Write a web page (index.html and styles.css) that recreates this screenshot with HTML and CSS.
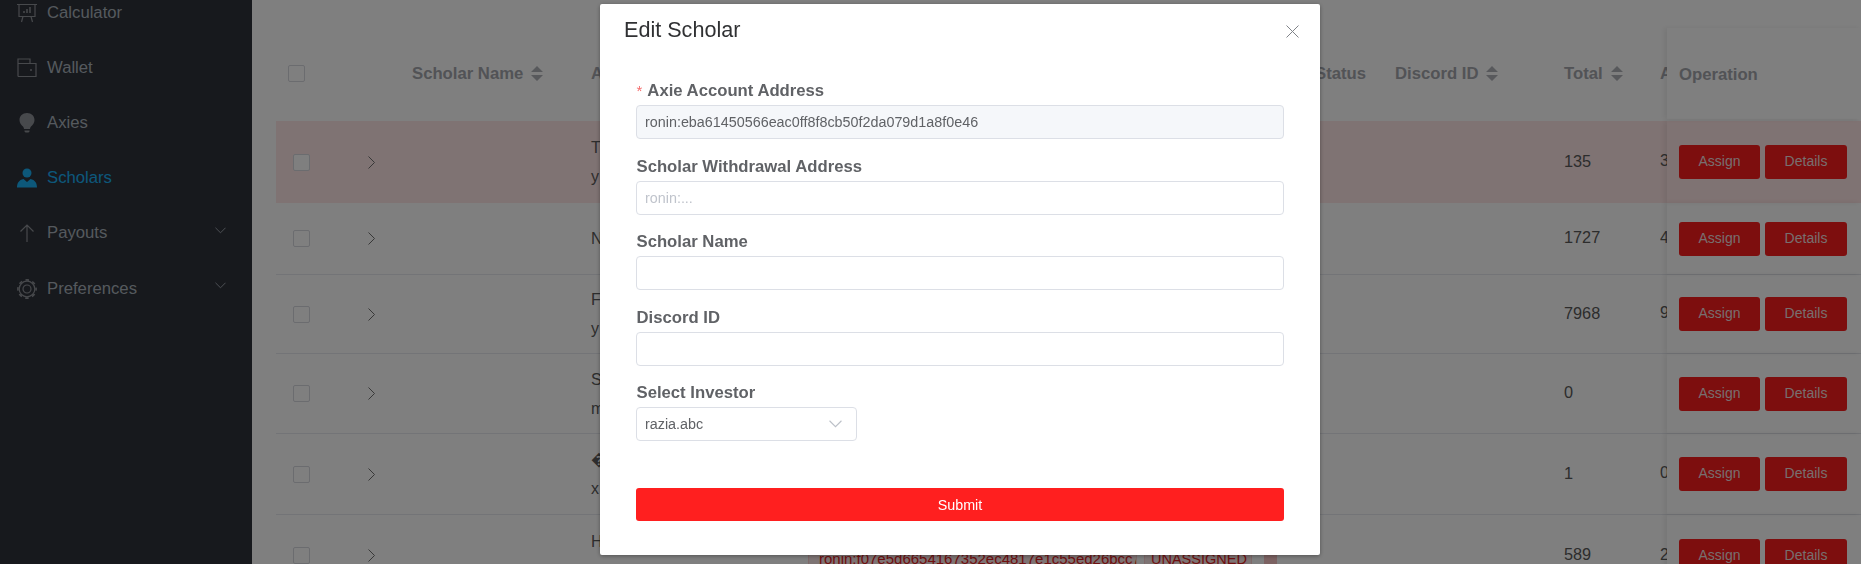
FILE: index.html
```html
<!DOCTYPE html>
<html lang="en">
<head>
<meta charset="utf-8">
<title>Edit Scholar</title>
<link rel="stylesheet" href="styles.css">
</head>
<body>
<div class="app">
  <aside class="sidebar">
    <a class="menu-item">
      <svg class="menu-icon" viewBox="0 0 20 20" fill="none" stroke="currentColor" stroke-width="1.2"><path d="M0 1.500h20M2 1.500v12h16v-12M6 13.500l-1.500 5.500M14 13.500l1.500 5.500"/><path d="M7 10V8M10 10V6M13 10V4" stroke-width="1.500"/></svg>
      <span>Calculator</span>
    </a>
    <a class="menu-item">
      <svg class="menu-icon" viewBox="0 0 20 20" fill="none" stroke="currentColor" stroke-width="1.2"><path d="M1 18.500V1h12v4.500M1 5.500h18v13H1"/><circle cx="14" cy="12" r="1" fill="currentColor" stroke="none"/></svg>
      <span>Wallet</span>
    </a>
    <a class="menu-item">
      <svg class="menu-icon" viewBox="0 0 20 20" fill="currentColor"><path d="M10 0C5.500 0 2.500 3.200 2.500 7c0 2.800 1.700 5 3.500 6.500.5.400.8 1.200 1 2.500h6c.2-1.300.5-2.100 1-2.500 1.800-1.500 3.500-3.700 3.500-6.500 0-3.800-3-7-7.500-7zM7.500 17.500h5v1l-1 1h-3l-1-1z"/></svg>
      <span>Axies</span>
    </a>
    <a class="menu-item menu-item-active">
      <svg class="menu-icon" viewBox="0 0 20 20" fill="currentColor"><circle cx="10" cy="5" r="4.500"/><path d="M0 19.500c0-4.500 2-7.500 6.500-8.500L10 14l3.500-3c4.500 1 6.500 4 6.500 8.500z"/></svg>
      <span>Scholars</span>
    </a>
    <a class="menu-item">
      <svg class="menu-icon" viewBox="0 0 20 20" fill="none" stroke="currentColor" stroke-width="1.2"><path d="M10 19V2M3.500 8.500L10 2l6.500 6.500"/></svg>
      <span>Payouts</span>
      <svg class="menu-caret" viewBox="0 0 12 7" fill="none" stroke="currentColor"><path d="M.5.500L6 6l5.500-5.500"/></svg>
    </a>
    <a class="menu-item">
      <svg class="menu-icon" viewBox="0 0 20 20" fill="none" stroke="currentColor"><circle cx="10" cy="10" r="7.800" stroke-width="1.200"/><circle cx="10" cy="10" r="9.100" stroke-width="1.600" stroke-dasharray="3.570 3.570" stroke-dashoffset="1.800"/><circle cx="10" cy="10" r="4" stroke-width="1.200"/></svg>
      <span>Preferences</span>
      <svg class="menu-caret" viewBox="0 0 12 7" fill="none" stroke="currentColor"><path d="M.5.500L6 6l5.500-5.500"/></svg>
    </a>
  </aside>

  <main class="main">
    <div class="table">
      <div class="row row-head">
        <div class="col-check"><span class="checkbox"></span></div>
        <div class="col-expand"></div>
        <div class="col-name">Scholar Name <svg class="sort" viewBox="0 0 12 15" fill="currentColor"><path d="M6 0l6 6H0zM0 9h12l-6 6z"/></svg></div>
        <div class="col-addr">Axie Address</div>
        <div class="col-status">Status</div>
        <div class="col-discord">Discord ID <svg class="sort" viewBox="0 0 12 15" fill="currentColor"><path d="M6 0l6 6H0zM0 9h12l-6 6z"/></svg></div>
        <div class="col-total">Total <svg class="sort" viewBox="0 0 12 15" fill="currentColor"><path d="M6 0l6 6H0zM0 9h12l-6 6z"/></svg></div>
        <div class="col-avg">A</div>
        <div class="col-op col-op-head">Operation</div>
      </div>

      <div class="row row-alert row-82">
        <div class="col-check"><span class="checkbox"></span></div>
        <div class="col-expand"><svg class="chevron" viewBox="0 0 7 13" fill="none" stroke="currentColor"><path d="M.5.500l6 6-6 6"/></svg></div>
        <div class="col-name"></div>
        <div class="col-addr"><p>T</p><p>y</p></div>
        <div class="col-status"></div>
        <div class="col-discord"></div>
        <div class="col-total">135</div>
        <div class="col-avg">3</div>
        <div class="col-op"><button class="btn">Assign</button><button class="btn">Details</button></div>
      </div>

      <div class="row row-72">
        <div class="col-check"><span class="checkbox"></span></div>
        <div class="col-expand"><svg class="chevron" viewBox="0 0 7 13" fill="none" stroke="currentColor"><path d="M.5.500l6 6-6 6"/></svg></div>
        <div class="col-name"></div>
        <div class="col-addr"><p>N</p></div>
        <div class="col-status"></div>
        <div class="col-discord"></div>
        <div class="col-total">1727</div>
        <div class="col-avg">4</div>
        <div class="col-op"><button class="btn">Assign</button><button class="btn">Details</button></div>
      </div>

      <div class="row row-79">
        <div class="col-check"><span class="checkbox"></span></div>
        <div class="col-expand"><svg class="chevron" viewBox="0 0 7 13" fill="none" stroke="currentColor"><path d="M.5.500l6 6-6 6"/></svg></div>
        <div class="col-name"></div>
        <div class="col-addr"><p>F</p><p>y</p></div>
        <div class="col-status"></div>
        <div class="col-discord"></div>
        <div class="col-total">7968</div>
        <div class="col-avg">9</div>
        <div class="col-op"><button class="btn">Assign</button><button class="btn">Details</button></div>
      </div>

      <div class="row row-80">
        <div class="col-check"><span class="checkbox"></span></div>
        <div class="col-expand"><svg class="chevron" viewBox="0 0 7 13" fill="none" stroke="currentColor"><path d="M.5.500l6 6-6 6"/></svg></div>
        <div class="col-name"></div>
        <div class="col-addr"><p>S</p><p>m</p></div>
        <div class="col-status"></div>
        <div class="col-discord"></div>
        <div class="col-total">0</div>
        <div class="col-avg"></div>
        <div class="col-op"><button class="btn">Assign</button><button class="btn">Details</button></div>
      </div>

      <div class="row row-81">
        <div class="col-check"><span class="checkbox"></span></div>
        <div class="col-expand"><svg class="chevron" viewBox="0 0 7 13" fill="none" stroke="currentColor"><path d="M.5.500l6 6-6 6"/></svg></div>
        <div class="col-name"></div>
        <div class="col-addr"><p>�</p><p>x</p></div>
        <div class="col-status"></div>
        <div class="col-discord"></div>
        <div class="col-total">1</div>
        <div class="col-avg">0</div>
        <div class="col-op"><button class="btn">Assign</button><button class="btn">Details</button></div>
      </div>

      <div class="row row-82">
        <div class="col-check"><span class="checkbox"></span></div>
        <div class="col-expand"><svg class="chevron" viewBox="0 0 7 13" fill="none" stroke="currentColor"><path d="M.5.500l6 6-6 6"/></svg></div>
        <div class="col-name"></div>
        <div class="col-addr col-addr-split">
          <div class="addr-name"><p>H</p><p>unol</p></div>
          <div class="tags"><span class="tag">ronin:f07e5d6654167352ec4817e1c55ed26bcc75</span><span class="tag tag-state">UNASSIGNED</span><span class="tag-dot"></span></div>
        </div>
        <div class="col-status"></div>
        <div class="col-discord"></div>
        <div class="col-total">589</div>
        <div class="col-avg">2</div>
        <div class="col-op"><button class="btn">Assign</button><button class="btn">Details</button></div>
      </div>
    </div>
  </main>
</div>

<div class="overlay">
  <section class="modal">
    <header class="modal-header">
      <h2 class="modal-title">Edit Scholar</h2>
      <svg class="modal-close" viewBox="0 0 13 13" fill="none" stroke="currentColor"><path d="M.5.500l12 12M12.500.500l-12 12"/></svg>
    </header>
    <form class="form">
      <div class="field">
        <label class="label"><span class="required">*</span>Axie Account Address</label>
        <input class="input input-disabled" value="ronin:eba61450566eac0ff8f8cb50f2da079d1a8f0e46" disabled>
      </div>
      <div class="field">
        <label class="label">Scholar Withdrawal Address</label>
        <input class="input" placeholder="ronin:...">
      </div>
      <div class="field">
        <label class="label">Scholar Name</label>
        <input class="input">
      </div>
      <div class="field">
        <label class="label">Discord ID</label>
        <input class="input">
      </div>
      <div class="field">
        <label class="label">Select Investor</label>
        <div class="select">
          <span>razia.abc</span>
          <svg class="select-caret" viewBox="0 0 12 7" fill="none" stroke="currentColor"><path d="M.5.500L6 6l5.500-5.500"/></svg>
        </div>
      </div>
      <button class="submit" type="button">Submit</button>
    </form>
  </section>
</div>
</body>
</html>
```

FILE: styles.css
```css
* { box-sizing: border-box; }
html, body { margin: 0; height: 564px; overflow: hidden; }
body { font-family: "Liberation Sans", Arial, sans-serif; font-size: 16px; color: #5a5a5a; background: #fff; }
p { margin: 0; }

.app { display: flex; height: 564px; overflow: hidden; }

.sidebar { flex: 0 0 252px; background: #2e323b; overflow: hidden; }
.menu-item { display: flex; align-items: center; gap: 10px; height: 55.200px; padding: 0 26px 0 17px; color: #aab2bc; font-size: 16.700px; }
.menu-item:first-child { margin-top: -15px; }
.menu-item-active { color: #1ab0f5; }
.menu-icon { flex: 0 0 20px; width: 20px; height: 20px; color: #8f9298; }
.menu-item-active .menu-icon { color: #1ab0f5; }
.menu-caret { width: 11px; height: 7px; margin-left: auto; margin-top: -6px; color: #a4aab2; }

.main { flex: 1; min-width: 0; padding: 28px 0 0 24px; overflow: hidden; }
.table { display: flex; flex-direction: column; }
.row { display: flex; align-items: center; border-bottom: 1px solid #e6e8ee; }
.row-head { height: 93px; border-bottom: 0; padding-bottom: 2px; font-size: 16.700px; font-weight: 700; color: #a4a6ad; }
.row-alert { background: #ffe6e6; border-bottom: 0; }
.row-72 { height: 72px; }
.row-79 { height: 79px; }
.row-80 { height: 80px; }
.row-81 { height: 81px; }
.row-82 { height: 82px; }

.col-check { flex: 0 0 76px; padding-left: 17px; display: flex; align-items: center; }
.row-head .col-check { padding-left: 12px; }
.col-expand { flex: 0 0 60px; padding-left: 16px; display: flex; align-items: center; color: #707070; }
.col-name { flex: 0 0 179px; display: flex; align-items: center; gap: 8px; }
.col-addr { flex: 0 0 724px; min-width: 0; line-height: 29px; white-space: nowrap; }
.col-addr-split { display: flex; align-items: flex-start; }
.addr-name { flex: 0 0 217px; }
.col-status { flex: 0 0 80px; }
.col-discord { flex: 0 0 169px; display: flex; align-items: center; gap: 8px; }
.col-total { flex: 0 0 96px; display: flex; align-items: center; gap: 8px; padding-bottom: 2px; font-size: 16.300px; }
.row-head .col-total { padding-bottom: 0; font-size: 16.700px; }
.col-avg { flex: 0 0 7px; padding-bottom: 2px; overflow: hidden; white-space: nowrap; }
.row-head .col-avg { padding-bottom: 0; }
.col-op { flex: 0 0 194px; align-self: stretch; display: flex; align-items: center; gap: 5px; padding-left: 12px; box-shadow: -3px 0 5px rgba(0, 0, 0, .07); position: relative; }
.col-op-head { padding-top: 2px; }

.checkbox { display: block; width: 17px; height: 17px; border: 1px solid #d6d8de; border-radius: 2px; background: #fff; }
.chevron { display: block; width: 7px; height: 13px; }
.sort { flex: none; width: 12px; height: 15px; color: #b0b2b8; }

.btn { flex: 0 0 81px; height: 34px; padding: 0 0 2px; border: 0; border-radius: 3px; background: #fb1d1d; color: #f0dede; font: 14px "Liberation Sans", Arial, sans-serif; }
.btn + .btn { flex-basis: 82px; }

.tags { display: flex; align-items: center; margin-top: 18px; }
.tag { display: block; flex: 0 0 329px; height: 28px; line-height: 26px; padding: 0 0 0 10px; overflow: hidden; background: #fde8e8; border: 1px solid #fcd3d3; border-radius: 3px; color: #e02020; font-size: 15px; }
.tag-state { flex: 0 0 108px; margin-left: 7px; padding: 0 0 0 6px; font-size: 14.500px; }
.tag-dot { display: block; width: 13px; height: 16px; margin-left: 12px; background: #f9c4c4; border-radius: 3px; }

.overlay { position: fixed; inset: 0; background: rgba(0, 0, 0, .5); }
.modal { position: absolute; left: 600px; top: 4px; width: 720px; height: 551px; background: #fff; border-radius: 2px; box-shadow: 0 1px 4px rgba(0, 0, 0, .35); }
.modal-header { display: flex; align-items: center; justify-content: space-between; height: 50px; padding: 0 21px 0 24px; }
.modal-title { margin: 2px 0 0; font-size: 21.600px; line-height: 50px; font-weight: 400; color: #303133; }
.modal-close { width: 13px; height: 13px; margin-top: 4px; color: #808388; }

.form { padding: 23px 36px 0; }
.field { margin-bottom: 13.500px; }
.label { display: block; height: 28px; padding-left: .5px; line-height: 27px; font-size: 16.700px; font-weight: 700; color: #606266; }
.required { margin-right: 5px; color: #f56c6c; font-weight: 400; font-size: 15px; }
.input { display: block; width: 100%; height: 34px; padding: 0 8px; border: 1px solid #dcdfe6; border-radius: 4px; outline: 0; background: #fff; color: #606266; font: 14.350px "Liberation Sans", Arial, sans-serif; }
.input::placeholder { color: #c0c4cc; }
.input-disabled { background: #f5f7fa; color: #606266; -webkit-text-fill-color: #606266; opacity: 1; }
.select { display: flex; align-items: center; justify-content: space-between; width: 221px; height: 34px; padding: 0 14px 0 8px; border: 1px solid #dcdfe6; border-radius: 4px; color: #606266; font-size: 14.350px; }
.select-caret { width: 13px; height: 8px; color: #bcc0c8; }
.submit { display: block; width: 100%; height: 33px; margin-top: 47px; border: 0; border-radius: 3px; background: #ff1f1f; color: #fff; font: 14.300px "Liberation Sans", Arial, sans-serif; }
```
